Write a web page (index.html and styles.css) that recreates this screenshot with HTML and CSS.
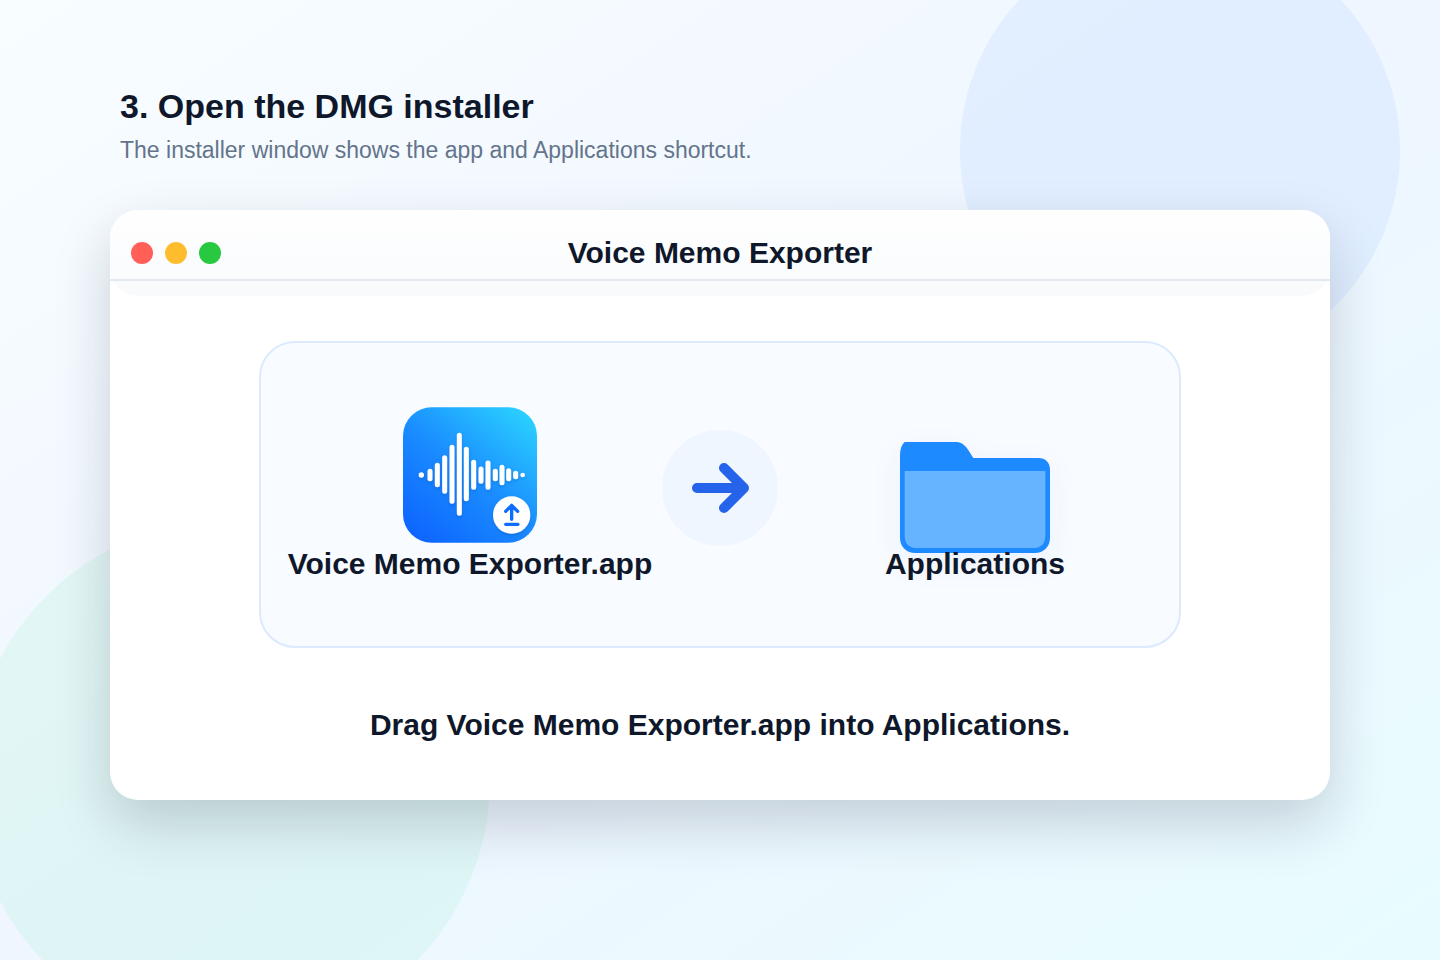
FILE: index.html
```html
<!DOCTYPE html>
<html lang="en">
<head>
    <meta charset="UTF-8">
    <meta name="viewport" content="width=device-width, initial-scale=1.0">
    <title>Open the DMG installer</title>
    <link rel="stylesheet" href="styles.css">
</head>
<body>
    <main class="page">
        <header class="intro">
            <h1>3. Open the DMG installer</h1>
            <p>The installer window shows the app and Applications shortcut.</p>
        </header>

        <section class="window">
            <div class="titlebar">
                <div class="lights">
                    <span class="light red"></span>
                    <span class="light yellow"></span>
                    <span class="light green"></span>
                </div>
                <h2>Voice Memo Exporter</h2>
            </div>

            <div class="panel">
                <div class="item">
                    <svg class="app-icon" viewBox="39 37 402 406" aria-hidden="true">
                        <defs>
                            <linearGradient id="appBg" x1="0.1" y1="1" x2="0.9" y2="0">
                                <stop offset="0" stop-color="#0d63ff"/>
                                <stop offset="0.5" stop-color="#1a8dff"/>
                                <stop offset="1" stop-color="#2bd2ff"/>
                            </linearGradient>
                            <filter id="soft" x="-20%" y="-20%" width="140%" height="140%">
                                <feDropShadow dx="0" dy="5" stdDeviation="4" flood-color="#0747b5" flood-opacity="0.35"/>
                            </filter>
                        </defs>
                        <rect x="39" y="37" width="402" height="406" rx="86" fill="url(#appBg)"/>
                        <g filter="url(#soft)">
                            <g stroke="#fff" stroke-width="15" stroke-linecap="round">
                                <path d="M120 229V251M142 211V269M164 188V289M186 157V319M208 121V355M229 163V311M251 202V277M273 222V259M294 204V277M316 229V251M336 217V263M356 227V251M377 235V245"/>
                            </g>
                            <circle cx="94" cy="240" r="8" fill="#fff"/>
                            <circle cx="398" cy="240" r="7" fill="#fff"/>
                            <circle cx="365" cy="360" r="56" fill="#fff"/>
                        </g>
                        <path d="M365 373V331M347 349L365 331L383 349M347 388H384" fill="none" stroke="#0d6dff" stroke-width="10" stroke-linecap="round" stroke-linejoin="round"/>
                    </svg>
                    <span class="label">Voice Memo Exporter.app</span>
                </div>

                <div class="arrow">
                    <svg viewBox="0 0 116 116" aria-hidden="true">
                        <path d="M35 58H82M62 38L82 58L62 78" fill="none" stroke="#2563eb" stroke-width="10" stroke-linecap="round" stroke-linejoin="round"/>
                    </svg>
                </div>

                <div class="item">
                    <svg class="folder-icon" viewBox="120 66 450 333" aria-hidden="true">
                        <path d="M134 66H290C314 66 326 92 340 114H536C556 114 570 128 570 148V353C570 380 551 399 524 399H166C139 399 120 380 120 353V105C120 88 125 74 134 66Z" fill="#1e8aff"/>
                        <path d="M134 153H556V347C556 371 543 384 519 384H171C147 384 134 371 134 347Z" fill="#66b3ff"/>
                    </svg>
                    <span class="label">Applications</span>
                </div>
            </div>

            <p class="caption">Drag Voice Memo Exporter.app into Applications.</p>
        </section>
    </main>
</body>
</html>
```
FILE: styles.css
```css
* {
    box-sizing: border-box;
}
body {
    margin: 0;
    font-family: "Liberation Sans", Arial, sans-serif;
    color: #0f172a;
}
h1, h2, p {
    margin: 0;
}
.page {
    position: relative;
    min-height: 100vh;
    padding: 86px 110px 160px;
    overflow: hidden;
    background: linear-gradient(to bottom right, #f8fdff 0%, #eff6ff 50%, #e8fcff 100%);
}
/* background circles */
.page::before,
.page::after {
    content: "";
    position: absolute;
    border-radius: 50%;
}
.page::before {
    top: -70px;
    right: 40px;
    width: 440px;
    height: 440px;
    background: rgba(191, 219, 254, 0.3);
}
.page::after {
    left: -30px;
    bottom: -80px;
    width: 520px;
    height: 520px;
    background: rgba(167, 243, 208, 0.22);
}
.intro {
    position: relative;
    padding-left: 10px;
}
.intro h1 {
    font-size: 34px;
    line-height: 40px;
}
.intro p {
    margin-top: 11px;
    font-size: 23px;
    line-height: 26px;
    color: #64748b;
}
.window {
    position: relative;
    z-index: 1;
    margin-top: 47px;
    padding-bottom: 58px;
    border-radius: 28px;
    background: #fff;
    box-shadow: 0 24px 56px rgba(15, 23, 42, 0.18);
}
.window::before {
    content: "";
    position: absolute;
    top: 0;
    left: 0;
    right: 0;
    height: 86px;
    border-radius: 28px;
    background: linear-gradient(#fff, #f8fafc);
}
.titlebar {
    position: relative;
    display: grid;
    grid-template-columns: 1fr auto 1fr;
    align-items: center;
    padding: 26px 21px 9px;
    border-bottom: 2px solid #e2e8f0;
}
.lights {
    display: flex;
    gap: 12px;
}
.light {
    width: 22px;
    height: 22px;
    border-radius: 50%;
}
.red {
    background: #ff5f57;
}
.yellow {
    background: #ffbd2e;
}
.green {
    background: #28c840;
}
.titlebar h2,
.label,
.caption {
    font-size: 30px;
    font-weight: bold;
    line-height: 34px;
}
.panel {
    display: grid;
    grid-template-columns: 38fr 116px 39fr;
    align-items: start;
    max-width: 922px;
    margin: 60px auto 0;
    padding: 64px 7px 65px 17px;
    border: 2px solid #dbeafe;
    border-radius: 36px;
    background: #f8fbff;
}
.item {
    display: flex;
    flex-direction: column;
    align-items: center;
}
.app-icon {
    width: 134px;
    height: 136px;
    margin-bottom: 4px;
}
/* the label overlaps the bottom edge of the folder */
.folder-icon {
    width: 150px;
    height: 111px;
    margin: 35px 0 -6px;
    filter: drop-shadow(0 10px 14px rgba(37, 99, 235, 0.06));
}
.label {
    position: relative;
    white-space: nowrap;
}
.arrow {
    height: 116px;
    margin-top: 23px;
    border-radius: 50%;
    background: #eff6ff;
}
.caption {
    margin-top: 60px;
    text-align: center;
}
```
